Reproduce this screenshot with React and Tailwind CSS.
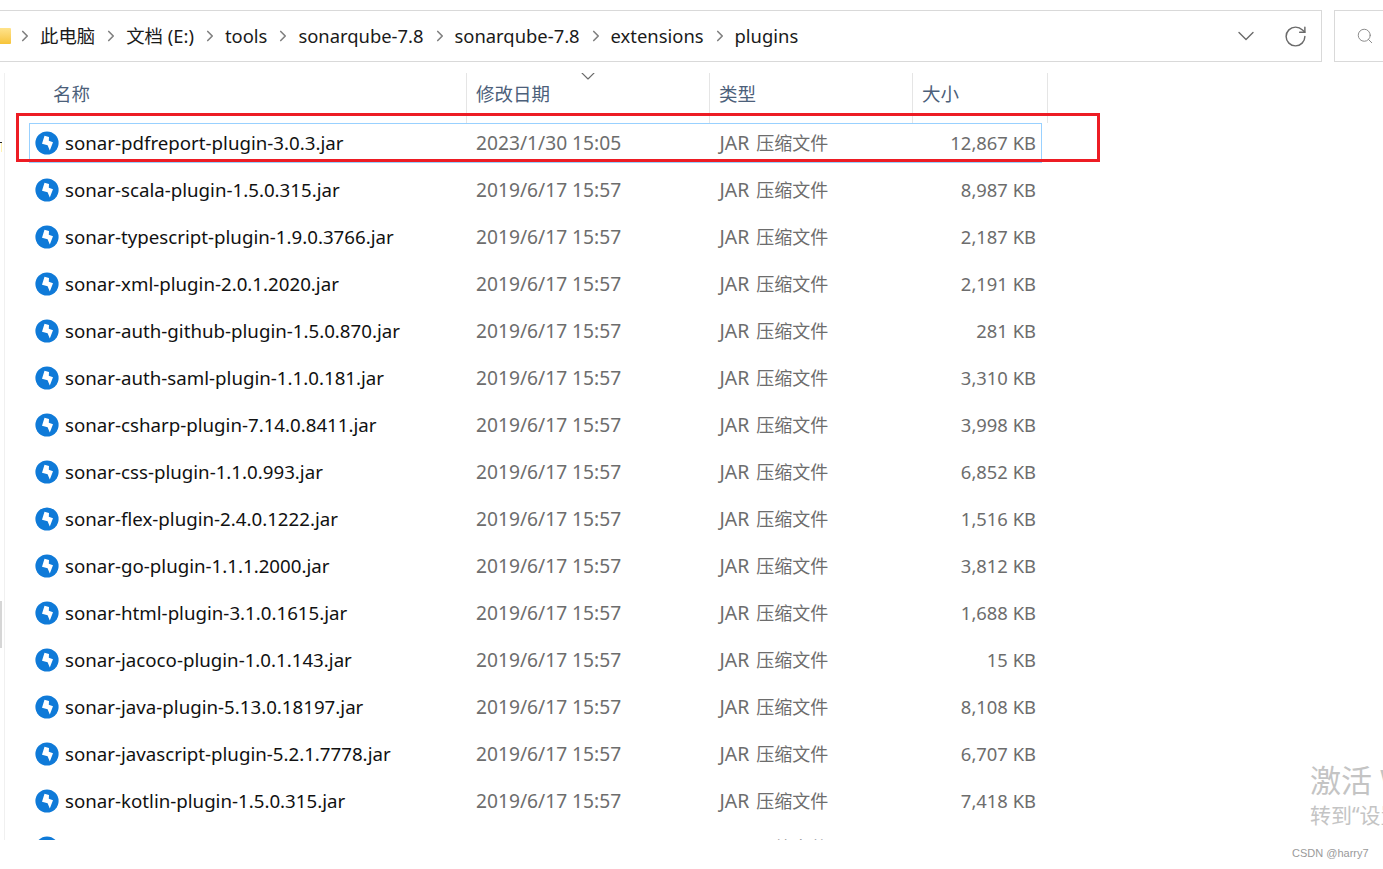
import { ChevronRight, ChevronDown, RotateCw, Search } from 'lucide-react';

const FONT = '[font-family:"Noto_Sans","Noto_Sans_CJK_SC",sans-serif]';

const files = [
  ['sonar-pdfreport-plugin-3.0.3.jar', '2023/1/30 15:05', '12,867 KB'],
  ['sonar-scala-plugin-1.5.0.315.jar', '2019/6/17 15:57', '8,987 KB'],
  ['sonar-typescript-plugin-1.9.0.3766.jar', '2019/6/17 15:57', '2,187 KB'],
  ['sonar-xml-plugin-2.0.1.2020.jar', '2019/6/17 15:57', '2,191 KB'],
  ['sonar-auth-github-plugin-1.5.0.870.jar', '2019/6/17 15:57', '281 KB'],
  ['sonar-auth-saml-plugin-1.1.0.181.jar', '2019/6/17 15:57', '3,310 KB'],
  ['sonar-csharp-plugin-7.14.0.8411.jar', '2019/6/17 15:57', '3,998 KB'],
  ['sonar-css-plugin-1.1.0.993.jar', '2019/6/17 15:57', '6,852 KB'],
  ['sonar-flex-plugin-2.4.0.1222.jar', '2019/6/17 15:57', '1,516 KB'],
  ['sonar-go-plugin-1.1.1.2000.jar', '2019/6/17 15:57', '3,812 KB'],
  ['sonar-html-plugin-3.1.0.1615.jar', '2019/6/17 15:57', '1,688 KB'],
  ['sonar-jacoco-plugin-1.0.1.143.jar', '2019/6/17 15:57', '15 KB'],
  ['sonar-java-plugin-5.13.0.18197.jar', '2019/6/17 15:57', '8,108 KB'],
  ['sonar-javascript-plugin-5.2.1.7778.jar', '2019/6/17 15:57', '6,707 KB'],
  ['sonar-kotlin-plugin-1.5.0.315.jar', '2019/6/17 15:57', '7,418 KB'],
  // only the top of the icon and the type column peek out above the fold
  ['', '', ''],
];

const crumbs = ['此电脑', '文档 (E:)', 'tools', 'sonarqube-7.8', 'sonarqube-7.8', 'extensions', 'plugins'];

// jar file icon: blue disc with a white bolt
function JarIcon() {
  return (
    <svg width="24" height="24" viewBox="0 0 24 24" className="shrink-0">
      <circle cx="12" cy="12" r="11.6" fill="#0f7ad8" />
      <path d="M9.5 4.8 L14 6 L13.8 9.8 L18 11.2 L14.8 19.4 L12.6 14.2 L7 12.8 Z" fill="#fff" />
    </svg>
  );
}

function FileRow({ file, selected }) {
  return (
    <div className={`ml-[29px] mb-[7px] flex h-[40px] w-[1013px] items-center border ${selected ? 'border-[#99d1ff]' : 'border-transparent'}`}>
      <div className="flex w-[446px] items-center gap-[6px] pl-[5px] text-[18.7px] text-[#111111]">
        <JarIcon />
        <span className="whitespace-nowrap">{file[0]}</span>
      </div>
      <div className="w-[243.5px] text-[19.2px] text-[#6d6d6d]">{file[1]}</div>
      <div className="flex w-[200px] items-baseline gap-[7px] text-[18px] text-[#6d6d6d]">
        <span className="text-[19.4px]">JAR</span>
        <span>压缩文件</span>
      </div>
      <div className="flex-1 whitespace-nowrap pr-[5px] text-right text-[18.4px] text-[#6d6d6d]">{file[2]}</div>
    </div>
  );
}

function HeaderCell({ label, className }) {
  return (
    <div className={`flex h-full items-end border-r border-[#e5e5e5] pb-[15px] text-[18.5px] text-[#4c607a] ${className}`}>
      {label}
    </div>
  );
}

export default function App() {
  return (
    <div className={`relative h-[869px] w-[1383px] overflow-hidden bg-white ${FONT}`}>
      {/* address bar + search box */}
      <div className="flex gap-[12px] pt-[10px]">
        <div className="flex h-[52px] w-[1322px] items-center border-y border-r border-[#d9d9d9] pr-[2px]">
          <div className="h-[16px] w-[11px] rounded-r-[1px] bg-gradient-to-b from-[#ffe38a] to-[#f7c436]" />
          <div className="-ml-[2px] flex flex-1 items-center text-[18.4px] text-[#1a1a1a]">
            {crumbs.map((c, i) => (
              <div key={i} className="flex items-center">
                <ChevronRight size={18} strokeWidth={2.2} className="ml-[7px] mr-[6px] text-[#808080]" />
                <span className="whitespace-nowrap">{c}</span>
              </div>
            ))}
          </div>
          <ChevronDown size={28} strokeWidth={1.2} className="mr-[23px] text-[#6a6a6a]" />
          <RotateCw size={25} strokeWidth={1.4} className="mr-[11px] text-[#6a6a6a]" />
        </div>
        <div className="flex h-[52px] flex-1 items-center border-y border-l border-[#d9d9d9] pl-[21px]">
          <Search size={18} strokeWidth={1.3} className="text-[#8a8a8a]" />
        </div>
      </div>

      {/* file list */}
      <div className="mt-[11px] ml-[4px] h-[767px] overflow-hidden border-l border-[#f0f0f0]">
        <div className="relative flex h-[50px] w-[1043px]">
          <HeaderCell label="名称" className="w-[462px] pl-[48px]" />
          <HeaderCell label="修改日期" className="w-[243px] pl-[9px]" />
          <HeaderCell label="类型" className="w-[203px] pl-[9px]" />
          <HeaderCell label="大小" className="w-[135px] pl-[9px]" />
          <ChevronDown size={24} strokeWidth={1.1} className="absolute left-[571px] -top-[9px] text-[#6a6a6a]" />
        </div>
        <div className="-ml-[5px] h-[717px] overflow-hidden">
          {files.map((f, i) => (
            <FileRow key={i} file={f} selected={i === 0} />
          ))}
        </div>
      </div>

      {/* red annotation */}
      <div className="absolute left-[16px] top-[113px] h-[49px] w-[1084px] border-[3px] border-[#ed1c24]" />

      {/* bits of the cropped-off nav pane at the left edge */}
      <div className="absolute left-0 top-[142px] h-[1px] w-[2px] bg-[#222222]" />
      <div className="absolute left-[1px] top-[143px] h-[9px] w-[1px] bg-[#fff3b0]" />
      <div className="absolute left-0 top-[601px] h-[47px] w-[2px] bg-[#d6d6d6]" />

      {/* windows watermark */}
      <div className="absolute left-[1310px] top-[758px] whitespace-nowrap text-[31px] leading-[44px] text-[#c4c4c4]">激活 W</div>
      <div className="absolute left-[1310px] top-[800px] whitespace-nowrap text-[21px] leading-[30px] text-[#c4c4c4]">转到“设置”</div>
      <div className="absolute left-[1292px] top-[846px] whitespace-nowrap text-[11px] leading-[14px] text-[#9a9a9a] [font-family:'Liberation_Sans',sans-serif]">CSDN @harry7</div>
    </div>
  );
}
